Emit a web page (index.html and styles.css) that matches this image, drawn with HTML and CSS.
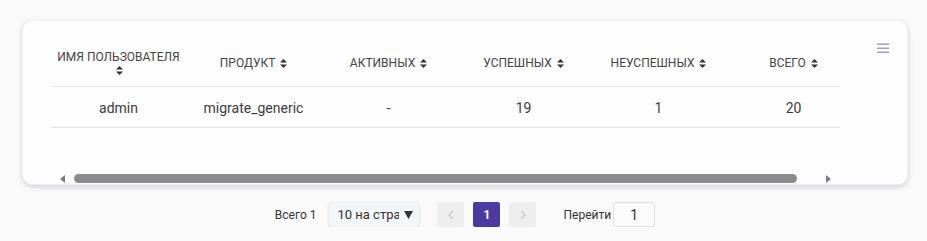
FILE: index.html
```html
<!DOCTYPE html>
<html lang="ru">
<head>
<meta charset="utf-8">
<title>Статистика</title>
<link rel="stylesheet" href="styles.css">
</head>
<body>
<div class="page">
  <div class="card">
    <svg class="menu-icon" width="12" height="10" viewBox="0 0 12 10"><rect x="0" y="0.4" width="12" height="1.5" fill="#9ca1bf"/><rect x="0" y="4.5" width="12" height="1.5" fill="#9ca1bf"/><rect x="0" y="8.6" width="12" height="1.5" fill="#9ca1bf"/></svg>
    <div class="viewport">
      <table class="grid">
        <thead>
          <tr>
            <th><span class="label">Имя пользователя</span> <svg class="sort" width="7" height="9" viewBox="0 0 7 9"><path d="M3.5 0L7 3.6H0Z" fill="#333"/><path d="M3.5 9L7 5.4H0Z" fill="#333"/></svg></th>
            <th><span class="label">Продукт</span> <svg class="sort" width="7" height="9" viewBox="0 0 7 9"><path d="M3.5 0L7 3.6H0Z" fill="#333"/><path d="M3.5 9L7 5.4H0Z" fill="#333"/></svg></th>
            <th><span class="label">Активных</span> <svg class="sort" width="7" height="9" viewBox="0 0 7 9"><path d="M3.5 0L7 3.6H0Z" fill="#333"/><path d="M3.5 9L7 5.4H0Z" fill="#333"/></svg></th>
            <th><span class="label">Успешных</span> <svg class="sort" width="7" height="9" viewBox="0 0 7 9"><path d="M3.5 0L7 3.6H0Z" fill="#333"/><path d="M3.5 9L7 5.4H0Z" fill="#333"/></svg></th>
            <th><span class="label">Неуспешных</span> <svg class="sort" width="7" height="9" viewBox="0 0 7 9"><path d="M3.5 0L7 3.6H0Z" fill="#333"/><path d="M3.5 9L7 5.4H0Z" fill="#333"/></svg></th>
            <th><span class="label">Всего</span> <svg class="sort" width="7" height="9" viewBox="0 0 7 9"><path d="M3.5 0L7 3.6H0Z" fill="#333"/><path d="M3.5 9L7 5.4H0Z" fill="#333"/></svg></th>
          </tr>
        </thead>
        <tbody>
          <tr>
            <td>admin</td>
            <td>migrate_generic</td>
            <td>-</td>
            <td>19</td>
            <td>1</td>
            <td>20</td>
          </tr>
        </tbody>
      </table>
    </div>
    <div class="scrollbar">
      <span class="arrow arrow-left"></span>
      <span class="thumb"></span>
      <span class="arrow arrow-right"></span>
    </div>
  </div>
  <div class="pager">
    <span class="total">Всего 1</span>
    <div class="size-select">
      <span class="size-text">10 на странице</span>
      <svg class="caret" width="9" height="8" viewBox="0 0 9 8"><path d="M0 0H9L4.5 8Z" fill="#333"/></svg>
    </div>
    <div class="pbtn pbtn-nav"><svg width="6" height="10" viewBox="0 0 6 10"><path d="M5 1L1 5L5 9" fill="none" stroke="#c9c9c9" stroke-width="1.3"/></svg></div>
    <div class="pbtn pbtn-active">1</div>
    <div class="pbtn pbtn-nav"><svg width="6" height="10" viewBox="0 0 6 10"><path d="M1 1L5 5L1 9" fill="none" stroke="#c9c9c9" stroke-width="1.3"/></svg></div>
    <span class="goto">Перейти</span>
    <div class="goto-input">1</div>
  </div>
</div>
</body>
</html>
```

FILE: styles.css
```css
html, body {
  margin: 0;
  padding: 0;
  background: #fafafa;
  font-family: Roboto, "Noto Sans", sans-serif;
  color: #333;
}

.page {
  padding: 20px 19px 0 22px;
}

.card {
  position: relative;
  height: 165px;
  box-sizing: border-box;
  background: #fdfdfd;
  border-radius: 10px;
  border: 1px solid #eef0f3;
  box-shadow: 0 2px 5px rgba(120, 130, 150, 0.35);
  display: flex;
  flex-direction: column;
}

.menu-icon {
  position: absolute;
  top: 22px;
  right: 18px;
}

.viewport {
  margin: 20px 0 0 28px;
  width: 789px;
  overflow: hidden;
}

.grid {
  width: 810px;
  table-layout: fixed;
  border-collapse: collapse;
}

.grid th {
  height: 45px;
  padding: 0 4px;
  font-size: 12px;
  font-weight: 400;
  line-height: 13px;
  text-transform: uppercase;
  text-align: center;
  vertical-align: middle;
  border-bottom: 1px solid #e6e6e6;
  color: #444;
}

.label {
  white-space: nowrap;
}

.sort {
  display: inline-block;
  vertical-align: -1px;
  margin-left: 2px;
}

.grid td {
  height: 39px;
  padding: 1px 4px 0;
  font-size: 14px;
  text-align: center;
  vertical-align: middle;
  border-bottom: 1px solid #e6e6e6;
  color: #3c3c3c;
}

.scrollbar {
  margin-top: auto;
  margin-bottom: 1px;
  margin-left: 37px;
  height: 9px;
  display: flex;
  align-items: center;
}

.arrow {
  width: 0;
  height: 0;
  border-top: 4px solid transparent;
  border-bottom: 4px solid transparent;
}

.arrow-left {
  border-right: 5px solid #7d7d7d;
}

.arrow-right {
  border-left: 5px solid #7d7d7d;
  margin-left: 29px;
}

.thumb {
  margin-left: 9px;
  width: 723px;
  height: 9px;
  border-radius: 5px;
  background: #8b8b8b;
}

.pager {
  margin-top: 17px;
  display: flex;
  justify-content: center;
  align-items: center;
  height: 25px;
  font-size: 12px;
}

.total {
  margin-right: 13px;
}

.size-select {
  width: 90px;
  height: 25px;
  box-sizing: border-box;
  background: #f1f6f9;
  border-radius: 3px;
  box-shadow: 0 1px 3px rgba(0, 0, 0, 0.18);
  display: flex;
  align-items: center;
  padding-left: 8px;
  margin-right: 18px;
  font-size: 13px;
}

.size-text {
  width: 62px;
  overflow: hidden;
  white-space: nowrap;
}

.caret {
  margin-left: 5px;
}

.pbtn {
  width: 27px;
  height: 25px;
  border-radius: 2px;
  display: flex;
  align-items: center;
  justify-content: center;
}

.pbtn-nav {
  background: #eeeeee;
}

.pbtn-active {
  background: #4c3aa3;
  color: #fff;
  font-weight: 700;
  font-size: 12px;
  margin: 0 9px;
}

.goto {
  margin-left: 27px;
  margin-right: 2px;
}

.goto-input {
  width: 42px;
  height: 25px;
  box-sizing: border-box;
  border: 1px solid #dedede;
  border-radius: 3px;
  background: #fcfcfc;
  display: flex;
  align-items: center;
  justify-content: center;
  font-size: 14px;
}
```
